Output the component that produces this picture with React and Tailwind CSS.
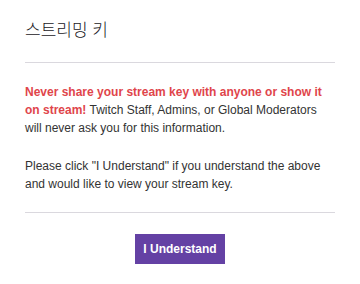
export default function App() {
  return (
    <div className="h-[284px] w-[360px] bg-white px-[25px] font-['Liberation_Sans',Arial,sans-serif]">
      <div className="border-b border-[#dad8de] pt-[21px] pb-[21px]">
        <h2 className="text-[17px] leading-[20px] font-light text-[#19171c] font-['Liberation_Sans','Noto_Sans_CJK_KR',sans-serif]">
          스트리밍 키
        </h2>
      </div>

      <div className="border-b border-[#dad8de] pt-[20px] pb-[19px] text-[12px] leading-[18px] text-[#333]">
        <p>
          <strong className="text-[#e0454b]">
            Never share your stream key with anyone or show it on stream!
          </strong>{" "}
          Twitch Staff, Admins, or Global Moderators will never ask you for
          this information.
        </p>
        <p className="mt-[20px]">
          Please click "I Understand" if you understand the above and would
          like to view your stream key.
        </p>
      </div>

      <div className="flex justify-center pt-[21px]">
        <button className="h-[30px] w-[90px] bg-[#6441a4] text-[12px] font-bold text-white">
          I Understand
        </button>
      </div>
    </div>
  );
}
